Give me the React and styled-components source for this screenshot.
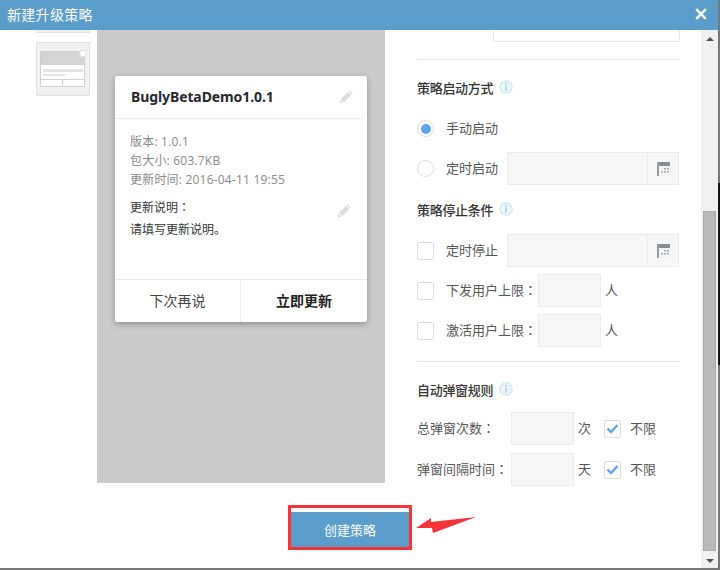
import React from "react";
import styled, { createGlobalStyle } from "styled-components";

const GlobalStyle = createGlobalStyle`
  html, body { margin: 0; padding: 0; background: #fff; }
  body { font-family: "Noto Sans CJK SC", "Liberation Sans", sans-serif; color: #444; }
  * { box-sizing: border-box; }
`;

const Frame = styled.div`
  width: 720px;
  height: 570px;
  position: relative;
  overflow: hidden;
  display: flex;
  flex-direction: column;
  padding: 0 2px 2px 0;
  background: linear-gradient(to bottom, #777 0 183px, #141414 183px 365px, #777 365px);
`;

const Header = styled.div`
  height: 30px;
  flex: none;
  display: flex;
  align-items: center;
  justify-content: space-between;
  padding: 0 11px 2px 7px;
  background: #5a9cca;
  color: #fff;
  font-size: 14px;
  letter-spacing: 0.3px;
`;

const Body = styled.div`
  flex: 1;
  min-height: 0;
  display: flex;
  background: #fff;
`;

const Scroller = styled.div`
  flex: 1;
  min-width: 0;
  overflow: hidden;
`;

const Columns = styled.div`
  display: flex;
  height: 453px;
`;

const ThumbColumn = styled.div`
  width: 97px;
  flex: none;
  padding-left: 36px;
  margin-top: -51px;
  display: flex;
  flex-direction: column;
  gap: 9px;
`;

const Thumb = styled.div`
  width: 54px;
  height: 54px;
  background: #f1f1f1;
  border: 1px solid #e2e2e2;
`;

const Preview = styled.div`
  width: 288px;
  flex: none;
  background: #cbcbcb;
  padding: 46px 0 0 18px;
`;

const Card = styled.div`
  width: 252px;
  height: 246px;
  background: #fff;
  border-radius: 2px;
  box-shadow: 0 2px 6px rgba(0, 0, 0, 0.3);
  display: flex;
  flex-direction: column;
`;

const CardHead = styled.div`
  height: 43px;
  margin-right: 5px;
  padding: 0 8px 2px 16px;
  display: flex;
  align-items: center;
  justify-content: space-between;
  border-bottom: 1px solid #ebebeb;
`;

const CardTitle = styled.div`
  font-family: "Noto Sans", "Liberation Sans", sans-serif;
  font-size: 14px;
  font-weight: 700;
  letter-spacing: -0.1px;
  color: #25282d;
`;

const Meta = styled.div`
  padding: 13px 0 0 15px;
  font-family: "Open Sans", "Noto Sans CJK SC", sans-serif;
  font-size: 12px;
  line-height: 19px;
  letter-spacing: 0.2px;
  color: #888;
`;

const NoteHead = styled.div`
  margin-top: 7px;
  padding: 0 15px;
  height: 20px;
  display: flex;
  align-items: center;
  justify-content: space-between;
  font-size: 12px;
  color: #333;
`;

const NoteBody = styled.div`
  margin-top: 3px;
  padding: 0 15px;
  font-size: 12px;
  line-height: 20px;
  color: #333;
`;

const CardFoot = styled.div`
  margin-top: auto;
  height: 43px;
  display: flex;
  border-top: 1px solid #ebebeb;
`;

const FootButton = styled.div`
  width: ${(p) => (p.$primary ? 127 : 125)}px;
  padding-bottom: 2px;
  display: flex;
  align-items: center;
  justify-content: center;
  font-size: 14px;
  color: ${(p) => (p.$primary ? "#222" : "#444")};
  font-weight: ${(p) => (p.$primary ? 700 : 400)};
  border-left: ${(p) => (p.$primary ? "1px solid #ebebeb" : "none")};
`;

// the reference centres its full-width colons, which the TC glyph does too
const Colon = styled.span`
  font-family: "Noto Sans CJK TC", sans-serif;
`;

const Form = styled.div`
  flex: 1;
  min-width: 0;
  padding: 0 21px 0 32px;
  font-size: 13px;
`;

const PartInput = styled.div`
  width: 187px;
  height: 32px;
  margin: -20px 0 0 76px;
  border: 1px solid #e8e8e8;
`;

const Divider = styled.div`
  height: 1px;
  background: #e6e6e6;
  margin-top: ${(p) => p.$top}px;
`;

const Heading = styled.div`
  height: 20px;
  margin-top: ${(p) => p.$top}px;
  padding-bottom: 2px;
  display: flex;
  align-items: center;
  gap: 6px;
  font-size: 13px;
  font-weight: 500;
  letter-spacing: -0.3px;
  color: #333;
`;

const Row = styled.div`
  height: 33px;
  margin-top: ${(p) => p.$top}px;
  display: flex;
  align-items: center;
`;

const Radio = styled.span`
  width: 17px;
  height: 17px;
  flex: none;
  border-radius: 50%;
  border: 1px solid #ddd;
  background: #fff;
  margin-right: 12px;
  display: flex;
  align-items: center;
  justify-content: center;
  &::after {
    content: "";
    width: 10px;
    height: 10px;
    border-radius: 50%;
    background: ${(p) => (p.$on ? "#5ea3ea" : "transparent")};
  }
`;

const Check = styled.span`
  width: 17px;
  height: 18px;
  flex: none;
  border: 1px solid #ddd;
  border-radius: 2px;
  background: #fff;
  margin: ${(p) => (p.$inline ? "0 9px 0 13px" : "0 12px 0 0")};
  display: flex;
  align-items: center;
  justify-content: center;
`;

const Label = styled.span`
  width: ${(p) => p.$width}px;
  flex: none;
  padding-bottom: 2px;
  color: #555;
  white-space: nowrap;
`;

const BoxInput = styled.div`
  width: 63px;
  height: 33px;
  flex: none;
  background: #f7f7f7;
  border: 1px solid #ebebeb;
`;

const Unit = styled.span`
  margin-left: 4px;
  padding-bottom: 2px;
  color: #555;
`;

const DateInput = styled.div`
  width: 172px;
  height: 33px;
  flex: none;
  display: flex;
  justify-content: flex-end;
  background: #f7f7f7;
  border: 1px solid #ebebeb;
`;

const DateButton = styled.div`
  width: 31px;
  display: flex;
  align-items: center;
  justify-content: center;
  border-left: 1px solid #ebebeb;
`;

const ActionBar = styled.div`
  display: flex;
  justify-content: center;
  padding: 22px 1px 0 0;
`;

const CreateButton = styled.div`
  width: 124px;
  height: 45px;
  border: 3px solid #f3353a;
  background: #5a9cca;
  box-shadow: inset 0 4px 0 #fff;
  padding-top: 4px;
  display: flex;
  align-items: center;
  justify-content: center;
  color: #fff;
  font-size: 13px;
`;

const Arrow = styled.svg`
  position: absolute;
  left: 414px;
  top: 515px;
`;

const Scrollbar = styled.div`
  width: 17px;
  flex: none;
  background: #f1f1f1;
  display: flex;
  flex-direction: column;
  align-items: center;
`;

const ScrollArrow = styled.div`
  flex: none;
  margin: ${(p) => (p.$down ? "auto 0 5px" : "7px 0 0")};
  border-left: 4px solid transparent;
  border-right: 4px solid transparent;
  border-bottom: ${(p) => (p.$down ? "none" : "4px solid #505050")};
  border-top: ${(p) => (p.$down ? "4px solid #505050" : "none")};
`;

const ScrollThumb = styled.div`
  width: 13px;
  height: 340px;
  margin-top: 170px;
  flex: none;
  background: #b9b9b9;
  border: 1px solid #a9a9a9;
`;

const Pencil = ({ top = 0 }) => (
  <svg width="15" height="15" viewBox="0 0 15 15" style={top ? { marginTop: top } : undefined}>
    <path d="M10.6 1.2 13.8 4.4 12.7 5.5 9.5 2.3Z M8.8 3 12 6.2 5 13.2 1.8 10Z M1.2 10.8 4.2 13.8 0.6 14.4Z" fill="#dcdcdc" />
  </svg>
);

const InfoIcon = () => (
  <svg width="14" height="14" viewBox="0 0 14 14">
    <circle cx="7" cy="7" r="6.2" fill="#eef6fc" stroke="#cfe5f6" strokeWidth="1.2" />
    <rect x="6.2" y="3" width="1.6" height="1.6" fill="#a8cdea" />
    <rect x="6.2" y="5.6" width="1.6" height="5.2" fill="#a8cdea" />
  </svg>
);

const CalendarIcon = () => (
  <svg width="13" height="14" viewBox="0 0 13 14">
    <rect width="13" height="14" fill="#f2f3f3" />
    <rect width="13" height="4" fill="#848e93" />
    <rect width="2" height="14" fill="#929a9e" />
    <rect x="7" y="6" width="2" height="1.5" fill="#a3abaf" />
    <rect x="10" y="6" width="2" height="1.5" fill="#a3abaf" />
    <rect x="4" y="9" width="2" height="1.5" fill="#a3abaf" />
    <rect x="7" y="9" width="2" height="1.5" fill="#a3abaf" />
    <rect x="10" y="9" width="2" height="1.5" fill="#a3abaf" />
  </svg>
);

const Tick = () => (
  <svg width="13" height="11" viewBox="0 0 13 11">
    <path d="M1.5 5.5 5 9 11.5 2" fill="none" stroke="#5ea3ea" strokeWidth="2.4" />
  </svg>
);

const CloseIcon = () => (
  <svg width="12" height="12" viewBox="0 0 12 12">
    <path d="M1.2 1.2 10.8 10.8M10.8 1.2 1.2 10.8" stroke="#fff" strokeWidth="2.4" />
  </svg>
);

const ThumbDrawing = () => (
  <svg width="52" height="52" viewBox="0 0 52 52">
    <rect x="3.5" y="8.5" width="44" height="35" fill="#fff" stroke="#cfcfcf" />
    <rect x="4" y="9" width="43" height="13" fill="#d4d4d4" />
    <rect x="6" y="26" width="40" height="3" fill="#e4e4e4" />
    <rect x="6" y="31" width="22" height="2" fill="#e4e4e4" />
    <path d="M4 36.5H47M25.5 36.5V43" stroke="#cfcfcf" fill="none" />
    <circle cx="46" cy="10.5" r="3.5" fill="#fff" stroke="#dedede" />
  </svg>
);

const App = () => (
  <Frame>
    <GlobalStyle />
    <Header>
      <span>新建升级策略</span>
      <CloseIcon />
    </Header>
    <Body>
      <Scroller>
        <Columns>
          <ThumbColumn>
            <Thumb />
            <Thumb>
              <ThumbDrawing />
            </Thumb>
          </ThumbColumn>
          <Preview>
            <Card>
              <CardHead>
                <CardTitle>BuglyBetaDemo1.0.1</CardTitle>
                <Pencil />
              </CardHead>
              <Meta>
                <div>版本: 1.0.1</div>
                <div>包大小: 603.7KB</div>
                <div>更新时间: 2016-04-11 19:55</div>
              </Meta>
              <NoteHead>
                <span>
                  更新说明<Colon>：</Colon>
                </span>
                <Pencil top={8} />
              </NoteHead>
              <NoteBody>请填写更新说明。</NoteBody>
              <CardFoot>
                <FootButton>下次再说</FootButton>
                <FootButton $primary>立即更新</FootButton>
              </CardFoot>
            </Card>
          </Preview>
          <Form>
            <PartInput />
            <Divider $top={17} />
            <Heading $top={18}>
              策略启动方式
              <InfoIcon />
            </Heading>
            <Row $top={14}>
              <Radio $on />
              <Label $width={56}>手动启动</Label>
            </Row>
            <Row $top={7}>
              <Radio />
              <Label $width={61}>定时启动</Label>
              <DateInput>
                <DateButton>
                  <CalendarIcon />
                </DateButton>
              </DateInput>
            </Row>
            <Heading $top={15}>
              策略停止条件
              <InfoIcon />
            </Heading>
            <Row $top={14}>
              <Check />
              <Label $width={61}>定时停止</Label>
              <DateInput>
                <DateButton>
                  <CalendarIcon />
                </DateButton>
              </DateInput>
            </Row>
            <Row $top={7}>
              <Check />
              <Label $width={92}>
                下发用户上限<Colon>：</Colon>
              </Label>
              <BoxInput />
              <Unit>人</Unit>
            </Row>
            <Row $top={7}>
              <Check />
              <Label $width={92}>
                激活用户上限<Colon>：</Colon>
              </Label>
              <BoxInput />
              <Unit>人</Unit>
            </Row>
            <Divider $top={14} />
            <Heading $top={18}>
              自动弹窗规则
              <InfoIcon />
            </Heading>
            <Row $top={12}>
              <Label $width={94}>
                总弹窗次数<Colon>：</Colon>
              </Label>
              <BoxInput />
              <Unit>次</Unit>
              <Check $inline>
                <Tick />
              </Check>
              <Label $width={30}>不限</Label>
            </Row>
            <Row $top={8}>
              <Label $width={94}>
                弹窗间隔时间<Colon>：</Colon>
              </Label>
              <BoxInput />
              <Unit>天</Unit>
              <Check $inline>
                <Tick />
              </Check>
              <Label $width={30}>不限</Label>
            </Row>
          </Form>
        </Columns>
        <ActionBar>
          <CreateButton>创建策略</CreateButton>
        </ActionBar>
      </Scroller>
      <Scrollbar>
        <ScrollArrow />
        <ScrollThumb />
        <ScrollArrow $down />
      </Scrollbar>
    </Body>
    <Arrow width="64" height="20" viewBox="0 0 64 20">
      <polygon points="2,13 17,3 17,7 62,2 19,18 18,13" fill="#f3353a" />
    </Arrow>
  </Frame>
);

export default App;
